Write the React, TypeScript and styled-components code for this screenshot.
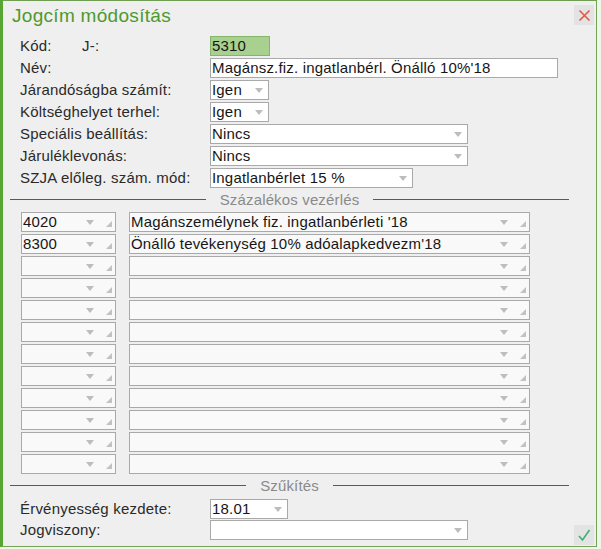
import React from 'react';
import styled, { createGlobalStyle } from 'styled-components';

const GlobalStyle = createGlobalStyle`
  html, body { margin: 0; padding: 0; }
  body {
    background: #eef6e9;
    font-family: "Liberation Sans", Arial, sans-serif;
  }
`;

const Dialog = styled.div`
  position: relative;
  box-sizing: border-box;
  width: 597px;
  height: 547px;
  background: #efefef;
  border-top: 1px solid #6f9d52;
  border-right: 1px solid #74a556;
  border-bottom: 1px solid #74a556;
  border-left: 3px solid #56a631;
  display: flex;
  flex-direction: column;
`;

const Header = styled.div`
  box-sizing: border-box;
  height: 35px;
  padding: 4px 0 0 9px;
`;

const Title = styled.h1`
  margin: 0;
  font-size: 19px;
  line-height: 22px;
  letter-spacing: 0.3px;
  font-weight: normal;
  color: #4d9a2e;
`;

const IconButton = styled.button<{ $pos: 'top' | 'bottom' }>`
  position: absolute;
  right: 2px;
  ${(p) => (p.$pos === 'top' ? 'top: 4px;' : 'bottom: 1px;')}
  width: 20px;
  height: 20px;
  padding: 0;
  border: none;
  background: #e3e3e3;
  display: flex;
  align-items: center;
  justify-content: center;
`;

const FormGrid = styled.div<{ $gap: number }>`
  display: grid;
  grid-template-columns: 190px auto;
  grid-auto-rows: 20px;
  row-gap: ${(p) => p.$gap}px;
  padding-left: 17px;
  justify-items: start;
  align-items: center;
`;

const Label = styled.div`
  display: flex;
  font-size: 15px;
  line-height: 20px;
  letter-spacing: 0.2px;
  color: #2a2a2a;
  white-space: nowrap;
`;

const LabelPart = styled.span`
  width: 62px;
`;

const Field = styled.div<{ $w: number; $tone?: 'plain' | 'green' | 'cell' }>`
  box-sizing: border-box;
  width: ${(p) => p.$w}px;
  height: 20px;
  display: flex;
  align-items: center;
  padding-left: 1px;
  border: 1px solid ${(p) => (p.$tone === 'green' ? '#87b46c' : '#a9a9a9')};
  background: ${(p) =>
    p.$tone === 'green' ? '#a8d08f' : p.$tone === 'cell' ? '#f9f9f9' : '#ffffff'};
  font-size: 15px;
  line-height: 18px;
  letter-spacing: 0.18px;
  color: #161616;
`;

const Value = styled.span`
  flex: 1;
  white-space: nowrap;
  overflow: hidden;
`;

const Arrow = styled.span<{ $mr: number }>`
  flex: none;
  width: 0;
  height: 0;
  border-left: 4.5px solid transparent;
  border-right: 4.5px solid transparent;
  border-top: 5px solid #bdbdbd;
  margin-right: ${(p) => p.$mr}px;
`;

const Grip = styled.span`
  flex: none;
  align-self: flex-end;
  width: 0;
  height: 0;
  border-left: 6px solid transparent;
  border-bottom: 6px solid #c2c2c2;
  margin: 0 3px 4px 0;
`;

const Separator = styled.div<{ $mb: number }>`
  display: flex;
  align-items: center;
  gap: 14px;
  height: 22px;
  margin: 0 27px ${(p) => p.$mb}px 7px;
  font-size: 15px;
  letter-spacing: 0.15px;
  color: #8a8a8a;
  white-space: nowrap;
  &::before,
  &::after {
    content: '';
    flex: 1;
    height: 1px;
    background: #5a5a5a;
  }
`;

const Table = styled.div`
  display: grid;
  grid-template-columns: 95px 401px;
  grid-auto-rows: 20px;
  column-gap: 13px;
  row-gap: 2px;
  padding-left: 18px;
`;

type SelectProps = { w: number; value?: string };
const Select = ({ w, value = '' }: SelectProps) => (
  <Field $w={w}>
    <Value>{value}</Value>
    <Arrow $mr={5} />
  </Field>
);

const Cell = ({ w, value = '' }: SelectProps) => (
  <Field $w={w} $tone="cell">
    <Value>{value}</Value>
    <Arrow $mr={12} />
    <Grip />
  </Field>
);

const rows: [string, string][] = [
  ['4020', "Magánszemélynek fiz. ingatlanbérleti '18"],
  ['8300', "Önálló tevékenység 10% adóalapkedvezm'18"],
  ...Array.from({ length: 10 }, () => ['', ''] as [string, string]),
];

export default function App() {
  return (
    <>
      <GlobalStyle />
      <Dialog>
        <Header>
          <Title>Jogcím módosítás</Title>
        </Header>
        <IconButton $pos="top" aria-label="Bezár">
          <svg width="13" height="13" viewBox="0 0 13 13">
            <path d="M1.5 1.5 L11.5 11.5 M11.5 1.5 L1.5 11.5" stroke="#dc5a48" strokeWidth="1.6" fill="none" />
          </svg>
        </IconButton>

        <FormGrid $gap={2}>
          <Label>
            <LabelPart>Kód:</LabelPart>J-:
          </Label>
          <Field $w={60} $tone="green">
            <Value>5310</Value>
          </Field>
          <Label>Név:</Label>
          <Field $w={348}>
            <Value>Magánsz.fiz. ingatlanbérl. Önálló 10%'18</Value>
          </Field>
          <Label>Járandóságba számít:</Label>
          <Select w={59} value="Igen" />
          <Label>Költséghelyet terhel:</Label>
          <Select w={59} value="Igen" />
          <Label>Speciális beállítás:</Label>
          <Select w={258} value="Nincs" />
          <Label>Járuléklevonás:</Label>
          <Select w={258} value="Nincs" />
          <Label>SZJA előleg. szám. mód:</Label>
          <Select w={203} value="Ingatlanbérlet 15 %" />
        </FormGrid>

        <Separator $mb={2}>Százalékos vezérlés</Separator>

        <Table>
          {rows.map(([code, name], i) => (
            <React.Fragment key={i}>
              <Cell w={95} value={code} />
              <Cell w={401} value={name} />
            </React.Fragment>
          ))}
        </Table>

        <Separator $mb={3}>Szűkítés</Separator>

        <FormGrid $gap={1}>
          <Label>Érvényesség kezdete:</Label>
          <Select w={78} value="18.01" />
          <Label>Jogviszony:</Label>
          <Select w={258} />
        </FormGrid>

        <IconButton $pos="bottom" aria-label="Mentés">
          <svg width="14" height="14" viewBox="0 0 14 14">
            <path d="M2 8 L5.5 12 L12.5 2" stroke="#3fae72" strokeWidth="1.6" fill="none" />
          </svg>
        </IconButton>
      </Dialog>
    </>
  );
}
